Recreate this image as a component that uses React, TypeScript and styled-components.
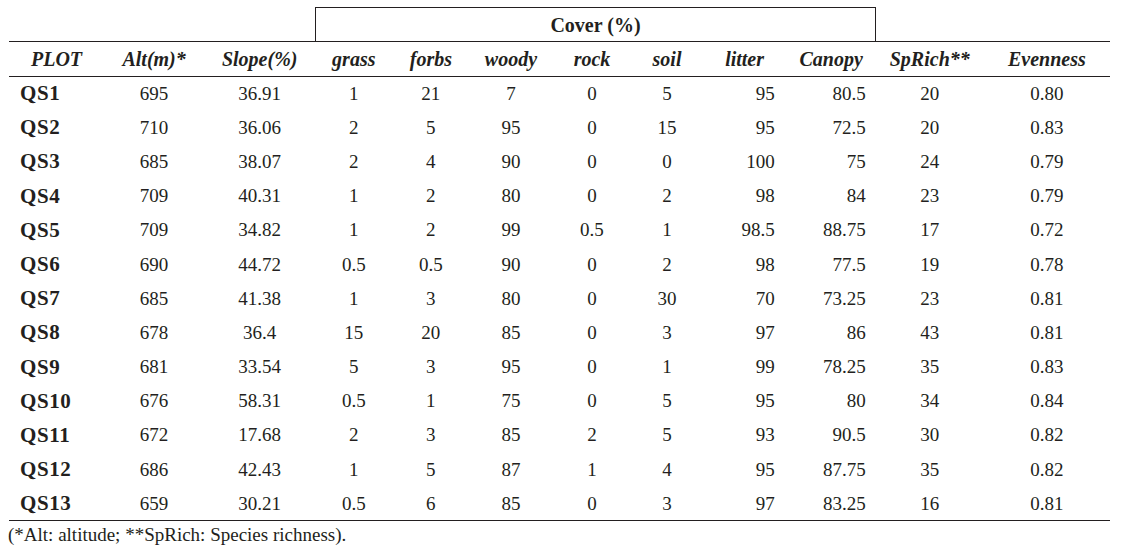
import React from "react";
import styled, { createGlobalStyle } from "styled-components";

const GlobalStyle = createGlobalStyle`
    html, body {
        margin: 0;
        padding: 0;
        background: #ffffff;
    }
    body {
        font-family: "Liberation Serif", "Times New Roman", serif;
        color: #231f20;
    }
`;

type Row = {
    plot: string;
    alt: string;
    slope: string;
    grass: string;
    forbs: string;
    woody: string;
    rock: string;
    soil: string;
    litter: string;
    canopy: string;
    spRich: string;
    evenness: string;
};

const rows: Row[] = [
    { plot: "QS1", alt: "695", slope: "36.91", grass: "1", forbs: "21", woody: "7", rock: "0", soil: "5", litter: "95", canopy: "80.5", spRich: "20", evenness: "0.80" },
    { plot: "QS2", alt: "710", slope: "36.06", grass: "2", forbs: "5", woody: "95", rock: "0", soil: "15", litter: "95", canopy: "72.5", spRich: "20", evenness: "0.83" },
    { plot: "QS3", alt: "685", slope: "38.07", grass: "2", forbs: "4", woody: "90", rock: "0", soil: "0", litter: "100", canopy: "75", spRich: "24", evenness: "0.79" },
    { plot: "QS4", alt: "709", slope: "40.31", grass: "1", forbs: "2", woody: "80", rock: "0", soil: "2", litter: "98", canopy: "84", spRich: "23", evenness: "0.79" },
    { plot: "QS5", alt: "709", slope: "34.82", grass: "1", forbs: "2", woody: "99", rock: "0.5", soil: "1", litter: "98.5", canopy: "88.75", spRich: "17", evenness: "0.72" },
    { plot: "QS6", alt: "690", slope: "44.72", grass: "0.5", forbs: "0.5", woody: "90", rock: "0", soil: "2", litter: "98", canopy: "77.5", spRich: "19", evenness: "0.78" },
    { plot: "QS7", alt: "685", slope: "41.38", grass: "1", forbs: "3", woody: "80", rock: "0", soil: "30", litter: "70", canopy: "73.25", spRich: "23", evenness: "0.81" },
    { plot: "QS8", alt: "678", slope: "36.4", grass: "15", forbs: "20", woody: "85", rock: "0", soil: "3", litter: "97", canopy: "86", spRich: "43", evenness: "0.81" },
    { plot: "QS9", alt: "681", slope: "33.54", grass: "5", forbs: "3", woody: "95", rock: "0", soil: "1", litter: "99", canopy: "78.25", spRich: "35", evenness: "0.83" },
    { plot: "QS10", alt: "676", slope: "58.31", grass: "0.5", forbs: "1", woody: "75", rock: "0", soil: "5", litter: "95", canopy: "80", spRich: "34", evenness: "0.84" },
    { plot: "QS11", alt: "672", slope: "17.68", grass: "2", forbs: "3", woody: "85", rock: "2", soil: "5", litter: "93", canopy: "90.5", spRich: "30", evenness: "0.82" },
    { plot: "QS12", alt: "686", slope: "42.43", grass: "1", forbs: "5", woody: "87", rock: "1", soil: "4", litter: "95", canopy: "87.75", spRich: "35", evenness: "0.82" },
    { plot: "QS13", alt: "659", slope: "30.21", grass: "0.5", forbs: "6", woody: "85", rock: "0", soil: "3", litter: "97", canopy: "83.25", spRich: "16", evenness: "0.81" },
];

type Col = { key: keyof Row; label: string; width: number; align: "left" | "center" | "right"; padRight?: number };

const columns: Col[] = [
    { key: "plot", label: "PLOT", width: 95, align: "left" },
    { key: "alt", label: "Alt(m)*", width: 100, align: "center" },
    { key: "slope", label: "Slope(%)", width: 111, align: "center" },
    { key: "grass", label: "grass", width: 77, align: "center" },
    { key: "forbs", label: "forbs", width: 77, align: "center" },
    { key: "woody", label: "woody", width: 83, align: "center" },
    { key: "rock", label: "rock", width: 79, align: "center" },
    { key: "soil", label: "soil", width: 71, align: "center" },
    { key: "litter", label: "litter", width: 84, align: "right", padRight: 12 },
    { key: "canopy", label: "Canopy", width: 89, align: "right", padRight: 10 },
    { key: "spRich", label: "SpRich**", width: 108, align: "center" },
    { key: "evenness", label: "Evenness", width: 126, align: "center" },
];

const serif = `"Liberation Serif", "Times New Roman", serif`;
const ink = "#231f20";

/* ------------------------------ Styled UI ------------------------------- */
const Page = styled.div`
    width: 1122px;
    height: 550px;
    padding: 7px 0 0 9px;
    box-sizing: border-box;
    overflow: hidden;
    font-family: ${serif};
    color: ${ink};
`;

const DataTable = styled.table`
    width: 1101px;
    border-collapse: collapse;
    table-layout: fixed;
    font-family: ${serif};
    font-size: 19px;
    color: ${ink};
`;

const GroupRow = styled.tr`
    height: 34px;
`;

const GroupCell = styled.th<{ $boxed?: boolean }>`
    padding: 2px 0 0;
    font-family: ${serif};
    font-weight: 700;
    font-size: 20px;
    text-align: center;
    vertical-align: middle;
    border-top: ${({ $boxed }) => ($boxed ? `1px solid ${ink}` : "none")};
    border-left: ${({ $boxed }) => ($boxed ? `1px solid ${ink}` : "none")};
    border-right: ${({ $boxed }) => ($boxed ? `1px solid ${ink}` : "none")};
    border-bottom: 1px solid ${ink};
`;

const HeadRow = styled.tr`
    height: 35px;
    border-bottom: 1px solid ${ink};
`;

const HeadCell = styled.th`
    padding: 0;
    font-family: ${serif};
    font-style: italic;
    font-weight: 700;
    font-size: 20px;
    text-align: center;
    vertical-align: middle;
    white-space: nowrap;
`;

const BodyRow = styled.tr<{ $last?: boolean }>`
    height: 34.2px;
    border-bottom: ${({ $last }) => ($last ? `1px solid ${ink}` : "none")};
`;

const BodyCell = styled.td<{ $align: string; $padRight?: number }>`
    padding: 0 ${({ $padRight }) => $padRight ?? 0}px 0 0;
    font-family: ${serif};
    font-size: 19px;
    text-align: ${({ $align }) => $align};
    vertical-align: middle;
    white-space: nowrap;
`;

const PlotCell = styled.td`
    padding: 0 0 0 11px;
    font-family: ${serif};
    font-size: 21px;
    font-weight: 700;
    letter-spacing: 0.6px;
    text-align: left;
    vertical-align: middle;
    white-space: nowrap;
`;

const Footnote = styled.div`
    font-family: ${serif};
    font-size: 19px;
    color: ${ink};
    margin-top: 3px;
    margin-left: -1px;
`;

export default function App() {
    return (
        <>
            <GlobalStyle />
            <Page>
                <DataTable>
                    <colgroup>
                        {columns.map(c => (
                            <col key={c.key} style={{ width: c.width }} />
                        ))}
                    </colgroup>
                    <thead>
                        <GroupRow>
                            <GroupCell colSpan={3} />
                            <GroupCell colSpan={7} $boxed>Cover (%)</GroupCell>
                            <GroupCell colSpan={2} />
                        </GroupRow>
                        <HeadRow>
                            {columns.map(c => (
                                <HeadCell key={c.key}>{c.label}</HeadCell>
                            ))}
                        </HeadRow>
                    </thead>
                    <tbody>
                        {rows.map((r, i) => (
                            <BodyRow key={r.plot} $last={i === rows.length - 1}>
                                <PlotCell>{r.plot}</PlotCell>
                                {columns.slice(1).map(c => (
                                    <BodyCell key={c.key} $align={c.align} $padRight={c.padRight}>
                                        {r[c.key]}
                                    </BodyCell>
                                ))}
                            </BodyRow>
                        ))}
                    </tbody>
                </DataTable>
                <Footnote>(*Alt: altitude; **SpRich: Species richness).</Footnote>
            </Page>
        </>
    );
}
